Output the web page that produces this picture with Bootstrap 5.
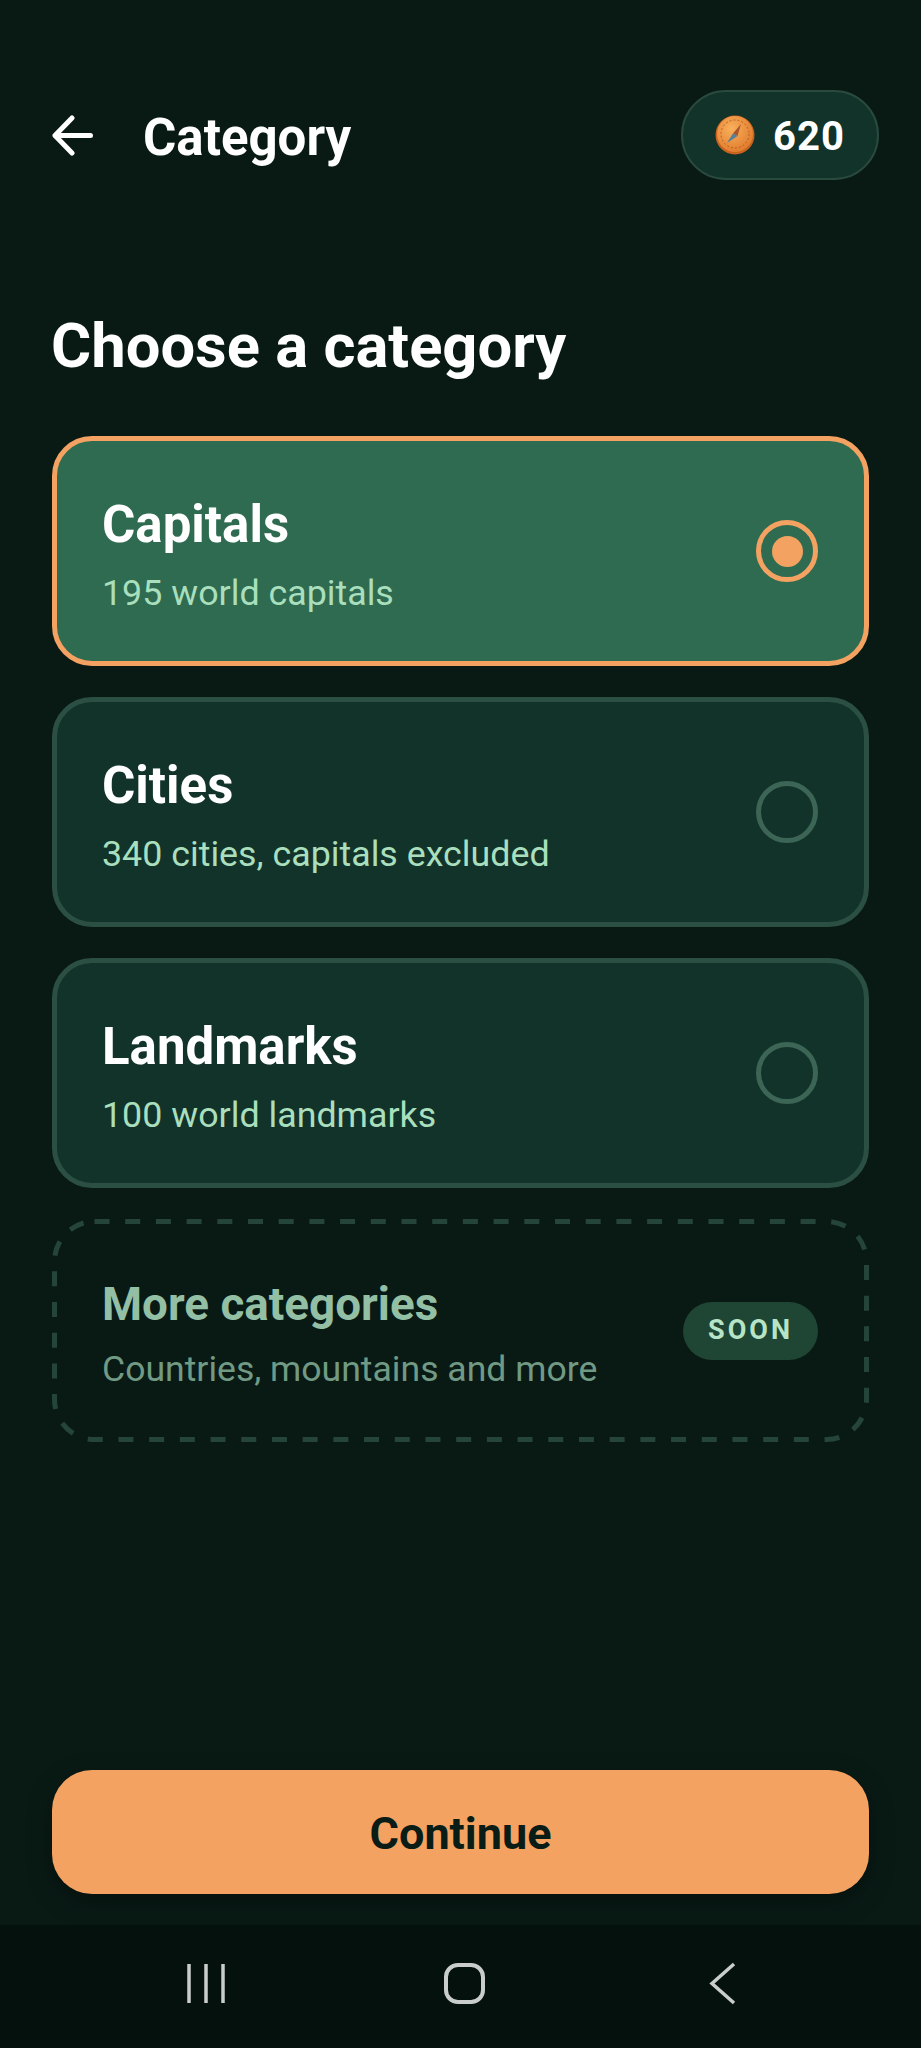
<!DOCTYPE html>
<html lang="en">
<head>
  <meta charset="UTF-8">
  <title>Category</title>
  <link href="https://cdn.jsdelivr.net/npm/bootstrap@5.3.3/dist/css/bootstrap.min.css" rel="stylesheet">
  <style>
    html, body {
      margin: 0;
      height: 2048px;
      overflow: hidden;
    }
    body {
      background-color: #091a15;
      font-family: Roboto, "Liberation Sans", sans-serif;
      color: #fff;
    }
    .app-shell {
      height: 2048px;
    }
    .top-row {
      padding: 90px 42px 0 52px;
      height: 180px;
    }
    .back-btn {
      width: 41px;
      height: 41px;
      margin-right: 50px;
    }
    .top-title {
      font-size: 51px;
      font-weight: 700;
      line-height: 60px;
      margin: 5px 0 0;
    }
    .coin-pill {
      width: 198px;
      height: 90px;
      background: #12332a;
      border: 2px solid #2a4a3e;
      border-radius: 45px;
      gap: 18px;
      padding-left: 32px;
    }
    .coin-count {
      font-size: 40px;
      font-weight: 700;
      letter-spacing: 1px;
      line-height: 1;
      margin-top: 4px;
    }
    .screen-body {
      padding: 0 52px;
    }
    .screen-heading {
      font-size: 61.5px;
      font-weight: 700;
      line-height: 68px;
      margin: 132px 0 56px -1px;
    }
    .cat-stack {
      gap: 31px;
    }
    .cat-item {
      height: 230px;
      background: #12332a;
      border: 5px solid #2b5043;
      border-radius: 40px;
      padding: 0 46px 0 45px;
    }
    .cat-item.picked {
      background: #2f6b50;
      border-color: #f4a261;
    }
    .cat-copy {
      padding-top: 8px;
    }
    .cat-name {
      font-size: 51px;
      font-weight: 700;
      line-height: 56px;
    }
    .cat-sub {
      font-size: 35.8px;
      line-height: 42px;
      margin-top: 19px;
      color: #a9dfbd;
    }
    .radio-ring {
      width: 62px;
      height: 62px;
      border: 5px solid #3c6556;
      border-radius: 50%;
    }
    .picked .radio-ring {
      border-color: #f4a261;
    }
    .radio-dot {
      width: 31px;
      height: 31px;
      border-radius: 50%;
      background: #f4a261;
    }
    .cat-soon {
      height: 223px;
      padding: 0 51px 0 50px;
    }
    .dash-frame {
      inset: 0;
      width: 100%;
      height: 100%;
    }
    .cat-soon .cat-name {
      font-size: 45.8px;
      line-height: 52px;
      color: #93bfa5;
    }
    .cat-soon .cat-sub {
      font-size: 35.6px;
      margin-top: 17px;
      color: #719a85;
    }
    .soon-tag {
      width: 135px;
      height: 58px;
      border-radius: 29px;
      background: #1f4534;
      color: #b7e4c7;
      font-size: 27px;
      font-weight: 700;
      letter-spacing: 3px;
    }
    .continue-btn {
      height: 124px;
      margin: 0 52px 31px;
      width: 817px;
      padding-top: 10px;
      background: #f4a261;
      border: 0;
      border-radius: 40px;
      color: #0a1c16;
      font-size: 45px;
      font-weight: 700;
      box-shadow: 0 8px 24px rgba(0, 0, 0, .35);
    }
    .sys-bar {
      height: 123px;
      background: #04110d;
    }
  </style>
</head>
<body>
<div class="app-shell d-flex flex-column">
  <div class="top-row d-flex justify-content-between align-items-start">
    <div class="d-flex align-items-center h-100">
      <svg class="back-btn" viewBox="0 0 41 41" fill="none" stroke="#fff" stroke-width="5" stroke-linecap="round" stroke-linejoin="round">
        <path d="M38.5 20.5H3M20 3L3 20.5 20 38"/>
      </svg>
      <h1 class="top-title">Category</h1>
    </div>
    <div class="coin-pill d-flex align-items-center">
      <svg width="40" height="40" viewBox="0 0 40 40">
        <defs>
          <radialGradient id="coinFace" cx="40%" cy="35%" r="70%">
            <stop offset="0" stop-color="#f9b05c"/>
            <stop offset="1" stop-color="#e07a2c"/>
          </radialGradient>
        </defs>
        <circle cx="20" cy="20" r="19.5" fill="#c9621f"/>
        <circle cx="20" cy="19" r="18" fill="url(#coinFace)"/>
        <circle cx="20" cy="19" r="14" fill="none" stroke="#b9601f" stroke-width="1" stroke-dasharray="2 2"/>
        <path d="M26 9L22.5 21 18 18.5Z" fill="#a8552a"/>
        <path d="M12 28L18 18.5 22.5 21Z" fill="#4f7f9a"/>
      </svg>
      <span class="coin-count">620</span>
    </div>
  </div>

  <div class="screen-body flex-grow-1">
    <h2 class="screen-heading">Choose a category</h2>
    <div class="cat-stack d-flex flex-column">
      <div class="cat-item picked d-flex align-items-center justify-content-between">
        <div class="cat-copy">
          <div class="cat-name">Capitals</div>
          <div class="cat-sub">195 world capitals</div>
        </div>
        <div class="radio-ring d-flex align-items-center justify-content-center"><div class="radio-dot"></div></div>
      </div>
      <div class="cat-item d-flex align-items-center justify-content-between">
        <div class="cat-copy">
          <div class="cat-name">Cities</div>
          <div class="cat-sub">340 cities, capitals excluded</div>
        </div>
        <div class="radio-ring"></div>
      </div>
      <div class="cat-item d-flex align-items-center justify-content-between">
        <div class="cat-copy">
          <div class="cat-name">Landmarks</div>
          <div class="cat-sub">100 world landmarks</div>
        </div>
        <div class="radio-ring"></div>
      </div>
      <div class="cat-soon position-relative d-flex align-items-center justify-content-between">
        <svg class="dash-frame position-absolute" viewBox="0 0 817 223" fill="none">
          <rect x="2.5" y="2.5" width="812" height="218" rx="40" stroke="#25443a" stroke-width="5" stroke-dasharray="15 15.7"/>
        </svg>
        <div class="cat-copy">
          <div class="cat-name">More categories</div>
          <div class="cat-sub">Countries, mountains and more</div>
        </div>
        <div class="soon-tag d-flex align-items-center justify-content-center">SOON</div>
      </div>
    </div>
  </div>

  <button class="continue-btn btn" type="button">Continue</button>

  <div class="sys-bar d-flex align-items-start">
    <svg width="921" height="123" viewBox="0 0 921 123" fill="none" stroke="#c9cdcb">
      <path d="M189 39V78M206 39V78M223 39V78" stroke-width="3.5"/>
      <rect x="446" y="40" width="37" height="37" rx="12" stroke-width="4"/>
      <path d="M734 39L712 58.5 734 78" stroke-width="3.5"/>
    </svg>
  </div>
</div>
<script src="https://cdn.jsdelivr.net/npm/bootstrap@5.3.3/dist/js/bootstrap.bundle.min.js"></script>
</body>
</html>
